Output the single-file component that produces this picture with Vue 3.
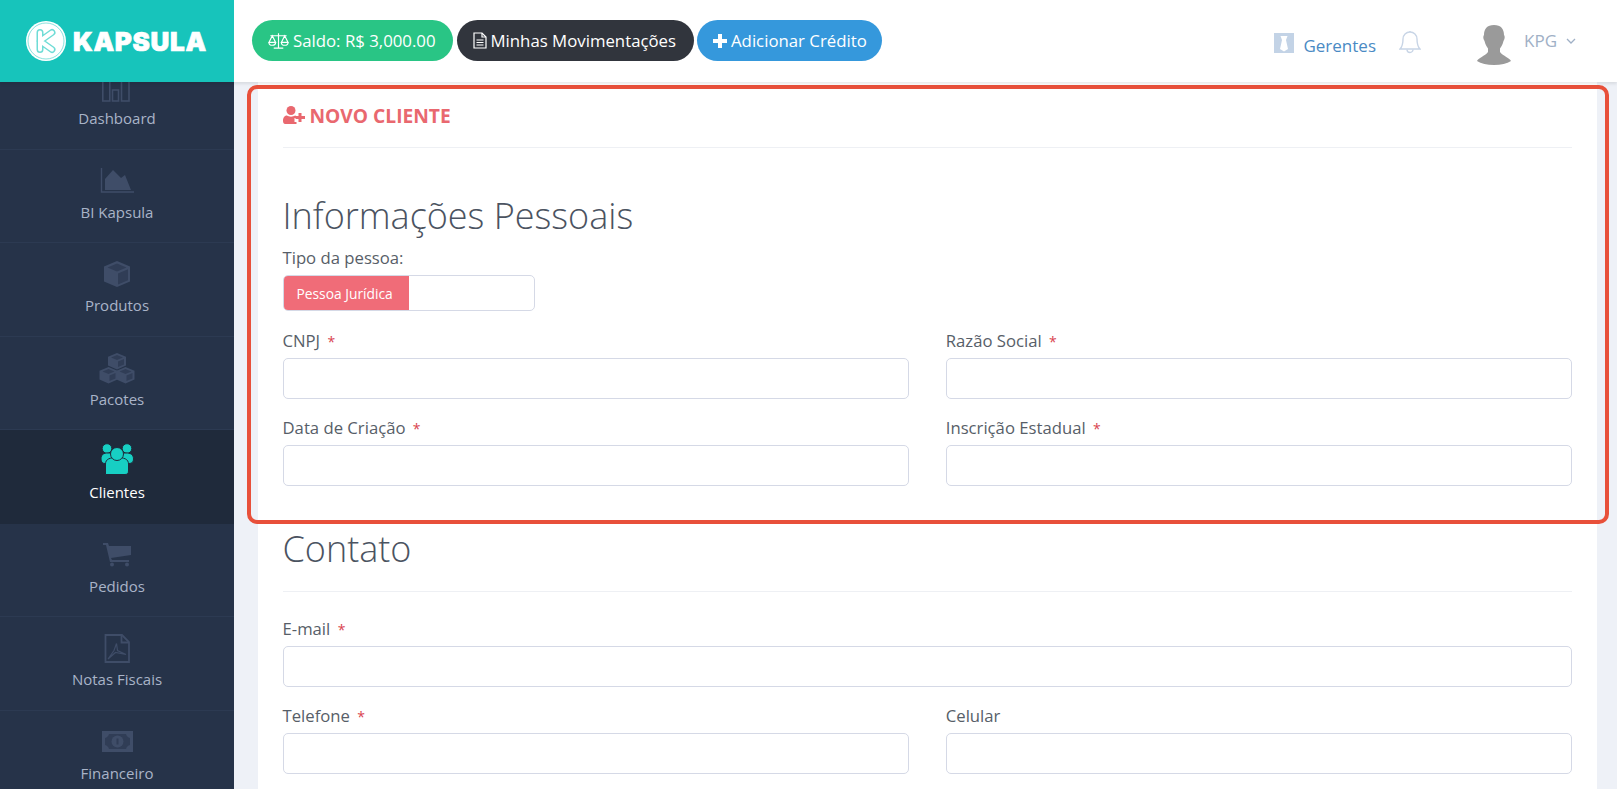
<script setup>
const baseIcon = '#3f4d68'
const faceIcon = '#303d56'

const navItems = [
  { label: 'Dashboard', icon: 'bars' },
  { label: 'BI Kapsula', icon: 'area' },
  { label: 'Produtos', icon: 'cube' },
  { label: 'Pacotes', icon: 'cubes' },
  { label: 'Clientes', icon: 'users', active: true },
  { label: 'Pedidos', icon: 'cart' },
  { label: 'Notas Fiscais', icon: 'pdf' },
  { label: 'Financeiro', icon: 'money' }
]

const cubeOffsets = [
  [8.5, 0],
  [0, 14],
  [17, 14]
]
</script>

<template>
  <div class="app">
    <header class="topbar">
      <div class="brand">
        <svg class="brand-mark" viewBox="0 0 40 40">
          <circle cx="20" cy="20" r="20" fill="#fff" />
          <circle cx="20" cy="20" r="18" fill="none" stroke="#17c4bb" stroke-width=".5" />
          <path d="M14 11.500V28.500M14 20L26 11.500M14 20L26 28.500" fill="none" stroke="#6fdcd6" stroke-width="7" stroke-linecap="round" stroke-linejoin="round" />
          <path d="M14 11.500V28.500M14 20L26 11.500M14 20L26 28.500" fill="none" stroke="#fff" stroke-width="4" stroke-linecap="round" stroke-linejoin="round" />
        </svg>
        <span class="brand-name">KAPSULA</span>
      </div>
      <div class="actions">
        <button class="pill pill-green">
          <svg class="pill-icon scale" viewBox="0 0 22 18" fill="none" stroke="#fff" stroke-width="1.200">
            <path d="M11 1V16M6 16.500H16M2.500 3.500H19.500" />
            <path d="M4.500 3.500L1 10.500H8ZM17.500 3.500L14 10.500H21Z" />
            <path d="M1 10.500A3.500 3 0 0 0 8 10.500M14 10.500A3.500 3 0 0 0 21 10.500" />
          </svg>
          Saldo: R$ 3,000.00
        </button>
        <button class="pill pill-dark">
          <svg class="pill-icon doc" viewBox="0 0 14 17" fill="none" stroke="#fff" stroke-width="1.200">
            <path d="M1 1H9L13 5V16H1Z" />
            <path d="M9 1V5H13M3.500 8H10.500M3.500 10.500H10.500M3.500 13H10.500" />
          </svg>
          Minhas Movimentações
        </button>
        <button class="pill pill-blue">
          <svg class="pill-icon plus" viewBox="0 0 14 14" fill="#fff">
            <path d="M5 0H9V5H14V9H9V14H5V9H0V5H5Z" />
          </svg>
          Adicionar Crédito
        </button>
      </div>
      <div class="account">
        <a class="managers">
          <svg class="tie" viewBox="0 0 20 20">
            <rect width="20" height="20" fill="#c3d3e6" />
            <path d="M6.500 3H13.500L12 7L14 16L10 18.500L6 16L8 7Z" fill="#fff" />
          </svg>
          Gerentes
        </a>
        <svg class="bell" viewBox="0 0 22 24" fill="none" stroke="#c8d5e6" stroke-width="1.400">
          <path d="M11 2A7 7 0 0 0 4 9C4 15 3 17 1 19H21C19 17 18 15 18 9A7 7 0 0 0 11 2Z" />
          <path d="M8 19.500A3 3 0 0 0 14 19.500M11 1V2" />
        </svg>
        <svg class="avatar" viewBox="0 0 34 40" fill="#9a9a9a">
          <path d="M17 0C24 0 27 4 27 10C28 11 28 14 26.500 16C25.500 20 24 22 23 23.500V27C26 31 33 33 34 36C30 38.500 24 40 17 40C10 40 4 38.500 0 36C1 33 8 31 11 27V23.500C10 22 8.500 20 7.500 16C6 14 6 11 7 10C7 4 10 0 17 0Z" />
        </svg>
        <span class="user-name">KPG</span>
        <svg class="chevron" viewBox="0 0 10 6" fill="none" stroke="#9fb0c6" stroke-width="1.300">
          <path d="M1 1L5 5L9 1" />
        </svg>
      </div>
    </header>

    <div class="body-row">
      <nav class="sidebar">
        <div class="nav-list">
          <div v-for="item in navItems" :key="item.label" class="nav-item" :class="{ active: item.active }">
            <svg class="nav-icon" viewBox="0 0 36 28">
              <g v-if="item.icon === 'bars'" fill="none" :stroke="baseIcon" stroke-width="1.600">
                <rect x="3.800" y="-6" width="7" height="34" />
                <rect x="13.500" y="17" width="6" height="11" />
                <rect x="22.500" y="-4" width="7.500" height="32" />
              </g>
              <g v-else-if="item.icon === 'area'">
                <path d="M2.500 1V25H35" fill="none" :stroke="baseIcon" stroke-width="1.400" />
                <path d="M6 23V12L14 3L22 11L26 8L32 23Z" :fill="baseIcon" />
              </g>
              <g v-else-if="item.icon === 'cube'">
                <path d="M18 1L31 6.500V21.500L18 27L5 21.500V6.500Z" :fill="baseIcon" />
                <path d="M18 3.500L27.500 7.500L18 11.500L8.500 7.500Z" :fill="faceIcon" />
                <path d="M19 13.500L29 9.300V20.300L19 24.500Z" :fill="faceIcon" />
              </g>
              <g v-else-if="item.icon === 'cubes'">
                <g v-for="offset in cubeOffsets" :key="offset[0]" :transform="`translate(${offset[0]} ${offset[1] - 1})`">
                  <path d="M9.500 0L18.500 3.800V12.500L9.500 16.500L.5 12.500V3.800Z" :fill="baseIcon" />
                  <path d="M9.500 2L15.500 4.500L9.500 7L3.500 4.500Z" :fill="faceIcon" />
                  <path d="M10.500 8.500L16.500 6V11.500L10.500 14Z" :fill="faceIcon" />
                </g>
              </g>
              <g v-else-if="item.icon === 'users'" fill="#17cfc3" stroke="#1f2a3b" stroke-width="1">
                <circle cx="8" cy="1.500" r="4.800" />
                <circle cx="28" cy="1.500" r="4.800" />
                <path d="M2 12C2 7 5 6 9 6H27C31 6 34.500 7 34.500 12C34.500 15 33 16.500 30 16.500H6C3.500 16.500 2 15 2 12Z" />
                <path d="M6.500 27.500V17C6.500 12 11 10.500 18 10.500C25 10.500 29.500 12 29.500 17V24C29.500 26.500 28 27.500 26 27.500Z" />
                <circle cx="18" cy="7" r="6.500" />
              </g>
              <g v-else-if="item.icon === 'cart'" :fill="baseIcon">
                <path d="M4 2H9L10 5H32V14L12 17L13 19H30V21H11L7 4H4Z" />
                <circle cx="13" cy="23.500" r="2" />
                <circle cx="28" cy="23.500" r="2" />
              </g>
              <g v-else-if="item.icon === 'pdf'" fill="none" :stroke="baseIcon" stroke-width="1.800">
                <path d="M6.500 1H23L30 8V28H6.500Z" />
                <path d="M22.500 1V8.500H30" />
                <path d="M9 25L15 16.500L17.500 9.500L18.500 16.500L27 20.500L16.500 18.500Z" stroke-width="1.200" />
              </g>
              <g v-else-if="item.icon === 'money'">
                <rect x="3" y="3" width="31" height="21" :fill="baseIcon" />
                <path d="M10 6H27C27.500 8 29 9.500 31 10V17C29 17.500 27.500 19 27 21H10C9.500 19 8 17.500 6 17V10C8 9.500 9.500 8 10 6Z" :fill="faceIcon" />
                <circle cx="18.500" cy="13.500" r="6" :fill="baseIcon" />
                <path d="M17.500 10.500H19.500V16.500H17.500Z" :fill="faceIcon" />
              </g>
            </svg>
            <span class="nav-label">{{ item.label }}</span>
          </div>
        </div>
      </nav>

      <main class="main">
        <div class="highlight"></div>
        <section class="card">
          <div class="card-title">
            <svg class="title-icon" viewBox="0 0 22 18" fill="#e9686f">
              <circle cx="8" cy="4.500" r="4.500" />
              <path d="M0 15C0 11 2 9.500 4 9.500C6 11 10 11 12 9.500C12.500 9.700 13 10 13.500 10.300V12H11.500V16H13.500V18H2C1 18 0 17 0 15Z" />
              <path d="M15.500 7H18.500V10H22V13H18.500V16H15.500V13H12.500V10H15.500Z" />
            </svg>
            NOVO CLIENTE
          </div>

          <h2 class="section-heading first">Informações Pessoais</h2>
          <div class="field-label switch-label">Tipo da pessoa:</div>
          <div class="switch">
            <span class="switch-on">Pessoa Jurídica</span>
          </div>

          <div class="form-grid">
            <div class="field">
              <label class="field-label">CNPJ <em>*</em></label>
              <div class="input"></div>
            </div>
            <div class="field">
              <label class="field-label">Razão Social <em>*</em></label>
              <div class="input"></div>
            </div>
            <div class="field">
              <label class="field-label">Data de Criação <em>*</em></label>
              <div class="input"></div>
            </div>
            <div class="field">
              <label class="field-label">Inscrição Estadual <em>*</em></label>
              <div class="input"></div>
            </div>
          </div>

          <h2 class="section-heading ruled">Contato</h2>

          <div class="form-grid after-rule">
            <div class="field wide">
              <label class="field-label">E-mail <em>*</em></label>
              <div class="input"></div>
            </div>
            <div class="field">
              <label class="field-label">Telefone <em>*</em></label>
              <div class="input"></div>
            </div>
            <div class="field">
              <label class="field-label">Celular</label>
              <div class="input"></div>
            </div>
          </div>
        </section>
      </main>
    </div>
  </div>
</template>

<style scoped>
.app {
  height: 789px;
  overflow: hidden;
  display: flex;
  flex-direction: column;
  font-family: "Open Sans", sans-serif;
  background: #eef1f7;
}

.topbar {
  position: relative;
  z-index: 2;
  flex: 0 0 82px;
  display: flex;
  align-items: center;
  background: #fff;
  box-shadow: 0 2px 3px rgba(0, 0, 0, .09);
}

.brand {
  flex: 0 0 234px;
  height: 82px;
  display: flex;
  align-items: center;
  gap: 7px;
  padding-left: 26px;
  box-sizing: border-box;
  background: #17c4bb;
}

.brand-mark {
  width: 40px;
  height: 40px;
}

.brand-name {
  font-family: Inter, sans-serif;
  font-weight: 900;
  font-size: 26px;
  letter-spacing: .7px;
  color: #fff;
  -webkit-text-stroke: .7px #fff;
}

.actions {
  display: flex;
  gap: 3.500px;
  margin: -1px 0 0 18px;
}

.pill {
  height: 41px;
  border: 0;
  border-radius: 21px;
  padding: 0 16px;
  display: flex;
  align-items: center;
  font-family: "Open Sans", sans-serif;
  font-size: 16.800px;
  color: #fff;
  white-space: nowrap;
}

.pill-green {
  width: 201px;
  background: #29c585;
}

.pill-dark {
  width: 237px;
  background: #31353d;
}

.pill-blue {
  width: 185px;
  background: #3598dc;
}

.pill-icon {
  flex: none;
  margin-right: 4px;
}

.scale {
  width: 21px;
  height: 18px;
}

.doc {
  width: 14px;
  height: 17px;
}

.plus {
  width: 14px;
  height: 14px;
}

.account {
  margin-left: auto;
  display: flex;
  align-items: center;
  height: 82px;
  padding-right: 41px;
}

.managers {
  display: flex;
  align-items: center;
  gap: 9px;
  font-size: 17px;
  color: #4a8ac4;
  margin-top: 8px;
}

.tie {
  width: 20px;
  height: 20px;
  margin-top: -4px;
}

.bell {
  width: 22px;
  height: 24px;
  margin: 0 0 0 23px;
  transform: translateY(1px);
}

.avatar {
  width: 34px;
  height: 40px;
  margin-left: 56px;
  margin-top: 8px;
}

.user-name {
  margin-left: 13px;
  margin-top: -2px;
  font-size: 17px;
  color: #9fb0c6;
}

.chevron {
  width: 10px;
  height: 6px;
  margin-left: 9px;
}

.body-row {
  flex: 1;
  min-height: 0;
  display: flex;
}

.sidebar {
  flex: 0 0 234px;
  overflow: hidden;
  background: #263349;
}

.nav-list {
  margin-top: -26px;
}

.nav-item {
  height: 93.500px;
  box-sizing: border-box;
  border-bottom: 1px solid #2c3a52;
  display: flex;
  flex-direction: column;
  align-items: center;
  padding-top: 17px;
}

.nav-item.active {
  background: #1f2a3b;
  border-bottom-color: #1f2a3b;
}

.nav-icon {
  width: 36px;
  height: 28px;
  overflow: visible;
}

.nav-label {
  margin-top: 7px;
  font-size: 15px;
  line-height: 20px;
  color: #a9b4c8;
}

.active .nav-label {
  color: #fff;
}

.main {
  position: relative;
  flex: 1;
  min-width: 0;
  padding: 0 20px 0 24px;
}

.highlight {
  position: absolute;
  z-index: 1;
  left: 13px;
  top: 3px;
  width: 1362px;
  height: 439px;
  box-sizing: border-box;
  border: 4px solid #e8503a;
  border-radius: 10px;
  pointer-events: none;
}

.card {
  height: 100%;
  box-sizing: border-box;
  padding: 0 25px 0 24.500px;
  background: #fff;
}

.card-title {
  height: 66px;
  box-sizing: border-box;
  display: flex;
  align-items: center;
  gap: 5px;
  padding-top: 1px;
  border-bottom: 1px solid #eef0f4;
  font-size: 19.200px;
  font-weight: 700;
  color: #e9686f;
}

.title-icon {
  width: 22px;
  height: 18px;
}

.section-heading {
  margin: 0;
  font-size: 36px;
  font-weight: 300;
  line-height: 46px;
  color: #4b5361;
}

.first {
  margin-top: 45px;
}

.ruled {
  margin-top: 40px;
  padding-bottom: 19px;
  border-bottom: 1px solid #eef0f4;
}

.field-label {
  display: block;
  height: 20px;
  font-size: 16.700px;
  line-height: 20px;
  color: #575e68;
}

.field-label em {
  margin-left: 3px;
  font-size: 14px;
  font-style: normal;
  color: #d9434f;
}

.switch-label {
  margin-top: 9px;
}

.switch {
  width: 252px;
  height: 36px;
  margin-top: 7px;
  box-sizing: border-box;
  border: 1.500px solid #d5d9e6;
  border-radius: 5px;
  overflow: hidden;
  display: flex;
}

.switch-on {
  width: 125px;
  display: flex;
  align-items: center;
  padding-left: 13px;
  box-sizing: border-box;
  background: #f06c78;
  color: #fff;
  font-size: 13.800px;
  font-weight: 500;
}

.form-grid {
  display: grid;
  grid-template-columns: 1fr 1fr;
  column-gap: 37px;
  row-gap: 19px;
  margin-top: 20px;
}

.form-grid.after-rule {
  margin-top: 27px;
}

.field.wide {
  grid-column: 1 / -1;
}

.field .field-label {
  margin-bottom: 7px;
}

.input {
  height: 41px;
  box-sizing: border-box;
  border: 1.500px solid #d5d9e6;
  border-radius: 5px;
  background: #fff;
}
</style>

<style>
html,
body {
  margin: 0;
  overflow: hidden;
}
</style>
